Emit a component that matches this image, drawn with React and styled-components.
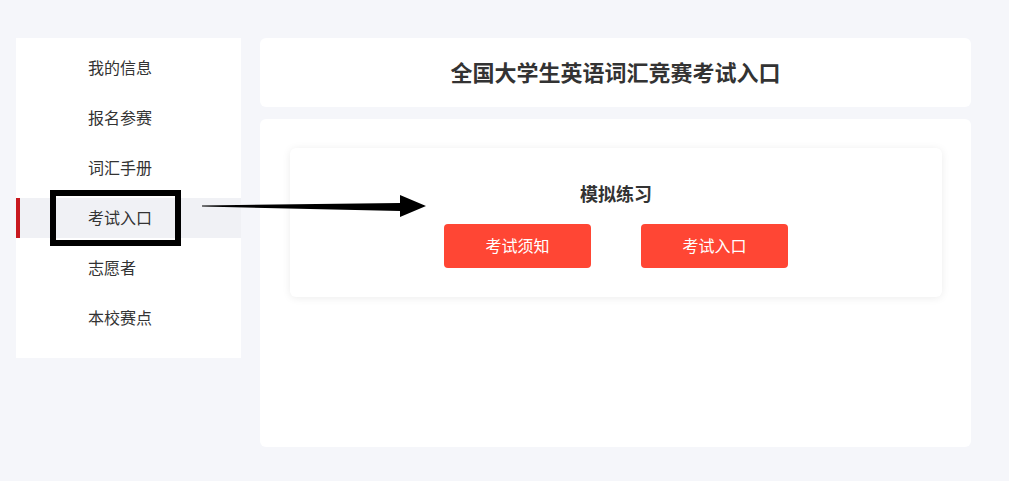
import styled, { createGlobalStyle } from "styled-components";

const GlobalStyle = createGlobalStyle`
  html, body {
    margin: 0;
    padding: 0;
    background: #f5f6fa;
    font-family: "Noto Sans CJK SC", "Noto Sans", sans-serif;
    color: #333;
  }
`;

const Page = styled.div`
  position: relative;
  display: flex;
  align-items: flex-start;
  gap: 19px;
  padding: 38px 38px 34px 16px;
`;

const Sidebar = styled.ul`
  width: 225px;
  margin: 0;
  padding: 10px 0 20px;
  list-style: none;
  background: #fff;
  display: flex;
  flex-direction: column;
  gap: 10px;
`;

const NavItem = styled.li`
  height: 40px;
  display: flex;
  align-items: center;
  padding: 0 0 3px 68px;
  font-size: 16px;
  color: #333;
  background: ${(p) => (p.active ? "#f0f1f5" : "transparent")};
  border-left: 4px solid ${(p) => (p.active ? "#c8191f" : "transparent")};
  box-sizing: border-box;
`;

const Main = styled.div`
  flex: 1;
  display: flex;
  flex-direction: column;
  gap: 12px;
`;

const Card = styled.div`
  background: #fff;
  border-radius: 6px;
`;

const Header = styled(Card)`
  height: 69px;
  display: flex;
  align-items: center;
  justify-content: center;
  padding-bottom: 3px;
  box-sizing: border-box;
  font-size: 22px;
  font-weight: 700;
  color: #333;
`;

const Content = styled(Card)`
  height: 328px;
  padding: 29px 29px 0 30px;
  box-sizing: border-box;
`;

const Practice = styled.div`
  border-radius: 6px;
  background: #fff;
  box-shadow: 0 1px 8px rgba(0, 0, 0, 0.08);
  padding: 32px 0 29px;
  display: flex;
  flex-direction: column;
  align-items: center;
`;

const PracticeTitle = styled.div`
  font-size: 18px;
  font-weight: 700;
  line-height: 26px;
  margin-bottom: 18px;
  color: #333;
`;

const Buttons = styled.div`
  display: flex;
  gap: 50px;
`;

const Button = styled.button`
  width: 147px;
  height: 44px;
  padding: 0 0 2px;
  border: none;
  border-radius: 4px;
  background: #ff4634;
  color: #fff;
  font-family: inherit;
  font-size: 16px;
`;

const Highlight = styled.div`
  position: absolute;
  left: 50px;
  top: 190px;
  width: 131px;
  height: 56px;
  border: 6px solid #000;
  box-sizing: border-box;
`;

const Arrow = styled.svg`
  position: absolute;
  left: 200px;
  top: 192px;
`;

const navItems = ["我的信息", "报名参赛", "词汇手册", "考试入口", "志愿者", "本校赛点"];

export default function App() {
  return (
    <>
      <GlobalStyle />
      <Page>
        <Sidebar>
          {navItems.map((item) => (
            <NavItem key={item} active={item === "考试入口"}>
              {item}
            </NavItem>
          ))}
        </Sidebar>
        <Main>
          <Header>全国大学生英语词汇竞赛考试入口</Header>
          <Content>
            <Practice>
              <PracticeTitle>模拟练习</PracticeTitle>
              <Buttons>
                <Button>考试须知</Button>
                <Button>考试入口</Button>
              </Buttons>
            </Practice>
          </Content>
        </Main>
        <Highlight />
        <Arrow width="230" height="30" viewBox="0 0 230 30">
          <polygon points="2,13.5 200,11 200,3 226,14 200,25 200,19 2,14.5" fill="#000" />
        </Arrow>
      </Page>
    </>
  );
}
